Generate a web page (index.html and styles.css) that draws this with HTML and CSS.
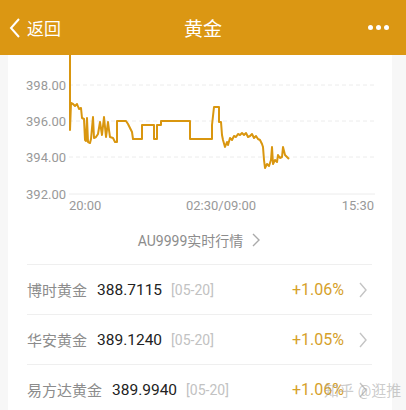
FILE: index.html
```html
<!DOCTYPE html>
<html>
<head>
	<meta charset="utf-8">
	<link rel="stylesheet" href="styles.css">
</head>
<body>
	<div class="topbar">
		<div class="back">
			<svg class="back-icon" width="12" height="22" viewBox="0 0 12 22"><path d="M10 2 L2 11 L10 20" fill="none" stroke="#fff" stroke-width="2"/></svg>
			<span>返回</span>
		</div>
		<div class="title">黄金</div>
		<div class="more"><i></i><i></i><i></i></div>
	</div>

	<div class="card">
		<svg class="chart" width="384" height="160" viewBox="8 55 384 160">
			<g class="grid">
				<line x1="69" y1="85" x2="375" y2="85" stroke-dasharray="4 3"/>
				<line x1="69" y1="121" x2="375" y2="121" stroke-dasharray="4 3"/>
				<line x1="69" y1="157" x2="375" y2="157" stroke-dasharray="4 3"/>
				<line x1="69" y1="194" x2="375" y2="194"/>
			</g>
			<g class="ylabels">
				<text x="66" y="90">398.00</text>
				<text x="66" y="126">396.00</text>
				<text x="66" y="162">394.00</text>
				<text x="66" y="199">392.00</text>
			</g>
			<g class="xlabels">
				<text x="69" y="210">20:00</text>
				<text x="221" y="210" text-anchor="middle">02:30/09:00</text>
				<text x="374" y="210" text-anchor="end">15:30</text>
			</g>
			<polyline class="price" points="70,55 70,130 71,103 73,104 75,106 77,104 79,109 81,108 82,118 84,119 85,140 86,141 87,118 88,142 90,143 91,139 93,117 94,138 96,137 98,134 100,122 102,135 104,117 106,137 108,122 109,130 110,137 113,138 115,142 117,142 117,121 126,121 128,124 130,128 132,132 133,139 142,139 142,125 154,125 154,139 157,139 157,125 161,125 161,121 190,121 190,139 212,139 212,125 214,107 219,107 219,122 221,122 222,135 223,140 225,147 227,142 228,145 230,138 232,140 234,136 236,137 238,134 240,135 242,133 244,135 246,133 248,137 250,136 252,134 254,138 256,136 258,139 260,140 262,144 263,147 264,160 265,168 267,164 269,166 271,160 272,147 273,164 275,160 277,162 278,155 280,158 282,157 283,147 285,155 287,157 289,159"/>
		</svg>

		<div class="quote-link">
			<span>AU9999实时行情</span>
			<svg width="10" height="14" viewBox="0 0 10 14"><path d="M2 1 L8 7 L2 13" fill="none" stroke="#aaa" stroke-width="1.4"/></svg>
		</div>

		<div class="fund">
			<span class="name">博时黄金</span>
			<span class="value">388.7115</span>
			<span class="date">[05-20]</span>
			<span class="rate">+1.06%</span>
			<svg class="arrow" width="10" height="16" viewBox="0 0 10 16"><path d="M2 1 L8 8 L2 15" fill="none" stroke="#c4c4c4" stroke-width="1.4"/></svg>
		</div>
		<div class="fund">
			<span class="name">华安黄金</span>
			<span class="value">389.1240</span>
			<span class="date">[05-20]</span>
			<span class="rate">+1.05%</span>
			<svg class="arrow" width="10" height="16" viewBox="0 0 10 16"><path d="M2 1 L8 8 L2 15" fill="none" stroke="#c4c4c4" stroke-width="1.4"/></svg>
		</div>
		<div class="fund">
			<span class="name">易方达黄金</span>
			<span class="value">389.9940</span>
			<span class="date">[05-20]</span>
			<span class="rate">+1.06%</span>
			<svg class="arrow" width="10" height="16" viewBox="0 0 10 16"><path d="M2 1 L8 8 L2 15" fill="none" stroke="#c4c4c4" stroke-width="1.4"/></svg>
		</div>

		<div class="watermark">知乎 @逛推</div>
	</div>
</body>
</html>
```

FILE: styles.css
```css
body, html {
	height: 100%;
}

body {
	margin: 0;
	padding: 0;
	background: #f7f7f7;
	font-family: Roboto, "Noto Sans CJK SC", sans-serif;
	overflow: hidden;
}

.topbar {
	height: 55px;
	background: #db9713;
	color: #fff;
	display: flex;
	align-items: center;
	position: relative;
}

.back {
	display: flex;
	align-items: center;
	padding-left: 9px;
	font-size: 17px;
	gap: 6px;
}

.title {
	position: absolute;
	left: 0;
	right: 0;
	text-align: center;
	font-size: 19px;
	pointer-events: none;
}

.more {
	margin-left: auto;
	margin-right: 17px;
	display: flex;
	gap: 3px;
}

.more i {
	display: block;
	width: 5px;
	height: 5px;
	border-radius: 50%;
	background: #fff;
}

.card {
	margin: 0 14px 0 8px;
	background: #fff;
	height: 355px;
	position: relative;
}

.chart {
	display: block;
}

.grid line {
	stroke: #ececec;
	stroke-width: 1;
}

.ylabels text {
	font-size: 13px;
	fill: #999;
	text-anchor: end;
}

.xlabels text {
	font-size: 13px;
	fill: #999;
}

.price {
	fill: none;
	stroke: #d9960f;
	stroke-width: 2;
	stroke-linejoin: round;
}

.quote-link {
	height: 49px;
	display: flex;
	align-items: center;
	justify-content: center;
	gap: 8px;
	font-size: 14px;
	color: #8c8c8c;
	margin: 0 20px 0 19px;
	border-bottom: 1px solid #efefef;
}

.fund {
	height: 49px;
	display: flex;
	align-items: center;
	margin: 0 20px 0 19px;
	border-bottom: 1px solid #efefef;
}

.fund .name {
	font-size: 15px;
	color: #8c8c8c;
	margin-right: 10px;
}

.fund .value {
	font-size: 15.5px;
	color: #222;
	margin-right: 9px;
}

.fund .date {
	font-size: 14px;
	color: #c2c2c2;
}

.fund .rate {
	margin-left: auto;
	font-size: 16px;
	color: #d6a12a;
	margin-right: 14px;
}

.fund .arrow {
	margin-right: 4px;
}

.watermark {
	position: absolute;
	left: 316px;
	top: 324px;
	font-size: 15px;
	white-space: nowrap;
	color: rgba(160, 160, 160, 0.55);
}
```
